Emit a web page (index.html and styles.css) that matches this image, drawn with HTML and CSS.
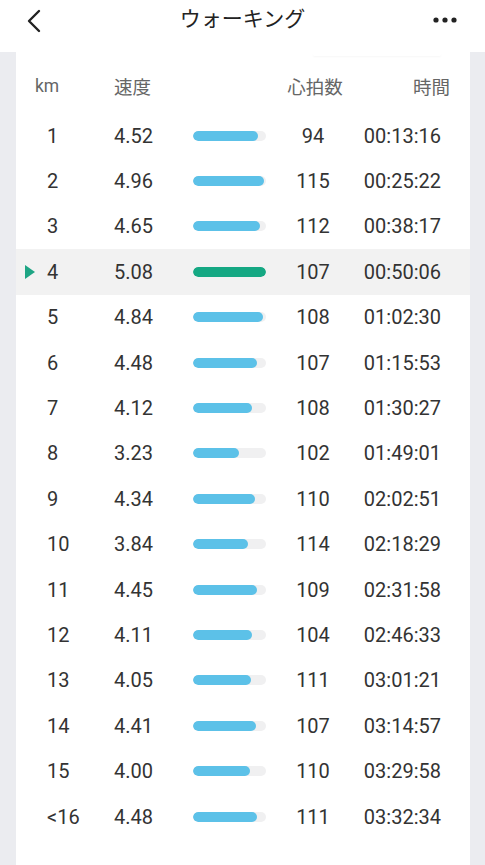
FILE: index.html
```html
<!DOCTYPE html>
<html lang="ja">
<head>
<meta charset="utf-8">
<link rel="stylesheet" href="styles.css">
</head>
<body>
<header class="topbar">
  <svg class="back" width="20" height="24" viewBox="0 0 20 24"><path d="M15 2 L5 12 L15 22" fill="none" stroke="#222" stroke-width="2.4" stroke-linecap="round" stroke-linejoin="round"/></svg>
  <h1 class="title">ウォーキング</h1>
  <svg class="more" width="26" height="8" viewBox="0 0 26 8"><circle cx="4" cy="4" r="2.6" fill="#222"/><circle cx="13" cy="4" r="2.6" fill="#222"/><circle cx="22" cy="4" r="2.6" fill="#222"/></svg>
</header>
<main class="card">
  <div class="shade"></div>
  <div class="row head">
    <span class="c-km">km</span><span class="c-sp">速度</span><span class="c-bar"></span><span class="c-hr">心拍数</span><span class="c-tm">時間</span>
  </div>
  <div id="rows"></div>
</main>
<script src="app.js"></script>
</body>
</html>
```
FILE: styles.css
```css
* { box-sizing: border-box; }
html, body { margin: 0; padding: 0; }
body {
  background: #ebecf0;
  font-family: Roboto, "Noto Sans CJK JP", sans-serif;
  color: #333;
  width: 485px;
  height: 865px;
  overflow: hidden;
}
.topbar {
  height: 52px;
  background: #fff;
  display: flex;
  align-items: center;
  justify-content: space-between;
  padding: 0 27px 0 24px;
  position: relative;
}
.back { margin-top: -10px; }
.more { margin-top: -12px; }
.title {
  position: absolute;
  left: 0; right: 0;
  top: 0;
  margin: 0;
  text-align: center;
  font-family: "Noto Sans CJK JP", sans-serif;
  font-weight: 400;
  font-size: 21px;
  line-height: 34px;
  color: #222;
  pointer-events: none;
}
.card {
  background: #fff;
  margin: 0 15px 0 16px;
  height: 813px;
  position: relative;
}
.shade {
  position: absolute;
  top: 1px;
  left: 297px;
  width: 128px;
  height: 3px;
  border-radius: 2px;
  box-shadow: 0 1px 2px rgba(0,0,0,0.035);
}
.row {
  display: grid;
  grid-template-columns: 74px 103px 73px 94px 81px;
  align-items: center;
  height: 45.4px;
  position: relative;
  font-size: 20px;
}
.row.head {
  height: 61px;
  padding-top: 6px;
  font-family: "Noto Sans CJK JP", sans-serif;
  font-size: 18.5px;
  color: #666;
}
.head .c-km { font-family: Roboto, sans-serif; font-size: 17.5px; padding-left: 19px; }
.head .c-hr { padding-left: 4px; }
.head .c-tm { margin-right: -9px; }
.row.active { background: #f2f2f2; }
.row.active::before {
  content: "";
  position: absolute;
  left: 9px;
  top: 50%;
  margin-top: -7px;
  border-left: 10px solid #1ea584;
  border-top: 7px solid transparent;
  border-bottom: 7px solid transparent;
}
.c-km { text-align: left; padding-left: 31px; }
.c-sp { padding-left: 24px; }
.c-hr { text-align: center; }
.c-tm { text-align: right; }
.track {
  height: 10px;
  border-radius: 5px;
  background: #f0f0f1;
  overflow: hidden;
}
.fill {
  height: 100%;
  border-radius: 5px;
  background: #5cc1e8;
}
.active .fill { background: #15a883; }
```
FILE: app.js
```js
const data = [
  ["1","4.52","94","00:13:16"],
  ["2","4.96","115","00:25:22"],
  ["3","4.65","112","00:38:17"],
  ["4","5.08","107","00:50:06"],
  ["5","4.84","108","01:02:30"],
  ["6","4.48","107","01:15:53"],
  ["7","4.12","108","01:30:27"],
  ["8","3.23","102","01:49:01"],
  ["9","4.34","110","02:02:51"],
  ["10","3.84","114","02:18:29"],
  ["11","4.45","109","02:31:58"],
  ["12","4.11","104","02:46:33"],
  ["13","4.05","111","03:01:21"],
  ["14","4.41","107","03:14:57"],
  ["15","4.00","110","03:29:58"],
  ["<16","4.48","111","03:32:34"]
];
const max = 5.08;
const wrap = document.getElementById("rows");
data.forEach(([km, sp, hr, tm], i) => {
  const row = document.createElement("div");
  row.className = "row" + (i === 3 ? " active" : "");
  const pct = (parseFloat(sp) / max * 100).toFixed(1);
  row.innerHTML =
    '<span class="c-km"></span><span class="c-sp"></span>' +
    '<span class="c-bar"><div class="track"><div class="fill" style="width:' + pct + '%"></div></div></span>' +
    '<span class="c-hr"></span><span class="c-tm"></span>';
  row.querySelector(".c-km").textContent = km;
  row.querySelector(".c-sp").textContent = sp;
  row.querySelector(".c-hr").textContent = hr;
  row.querySelector(".c-tm").textContent = tm;
  wrap.appendChild(row);
});
```
